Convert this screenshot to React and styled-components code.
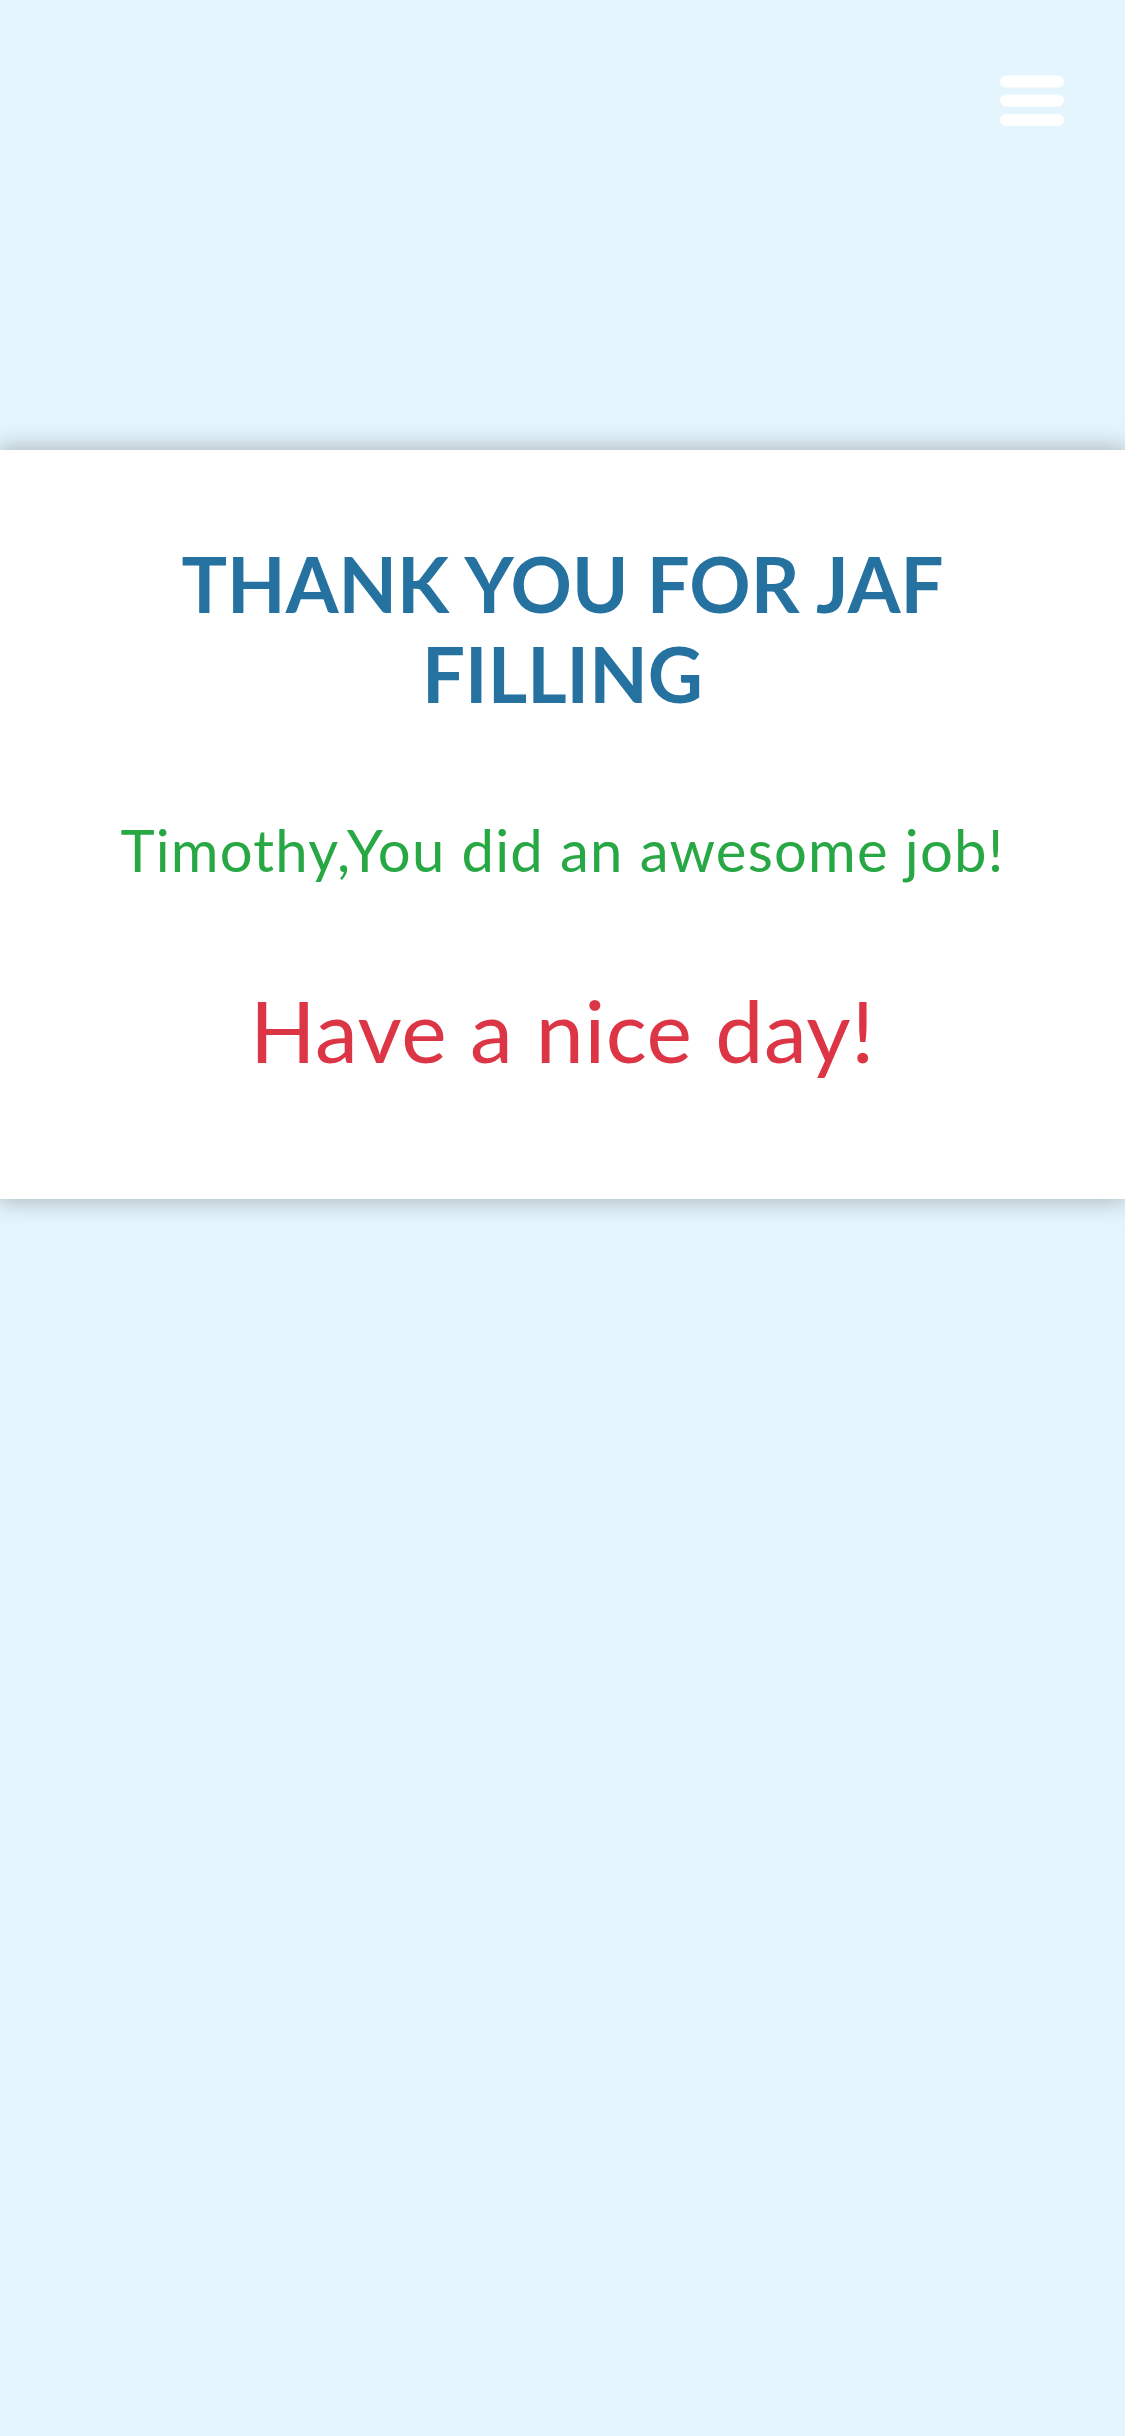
import React from "react";
import styled, { createGlobalStyle } from "styled-components";

const GlobalStyle = createGlobalStyle`
  html,
  body {
    margin: 0;
    padding: 0;
    background: #e4f5fe;
  }

  * {
    box-sizing: border-box;
  }
`;

const Page = styled.div`
  min-height: 100vh;
  background: #e4f5fe;
  font-family: "Lato", "Liberation Sans", sans-serif;
`;

const Header = styled.header`
  height: 450px;
  display: flex;
  justify-content: flex-end;
  align-items: flex-start;
  padding: 75px 61px 0 0;
`;

const MenuButton = styled.button`
  border: 0;
  padding: 0;
  background: none;
  width: 64px;
  height: 52px;
  cursor: pointer;
  display: block;

  svg {
    display: block;
  }
`;

const Card = styled.section`
  background: #fff;
  box-shadow: 0 0 22px 2px rgba(150, 158, 162, 0.75);
  padding: 89px 40px 118px;
  text-align: center;
`;

const Title = styled.h1`
  margin: 0 auto;
  max-width: 900px;
  font-size: 76px;
  line-height: 90px;
  font-weight: 700;
  color: #2572a0;
  text-transform: uppercase;
`;

const Message = styled.p`
  margin: ${(p) => p.$gap}px 0 0;
  font-size: ${(p) => p.$size}px;
  line-height: 1.2;
  letter-spacing: ${(p) => p.$spacing || 0}px;
  font-weight: 400;
  color: ${(p) => p.$color};
`;

const BarsIcon = () => (
  <svg width="64" height="52" viewBox="0 0 64 52" fill="#fff">
    <rect x="0" y="0.5" width="64" height="12" rx="6" />
    <rect x="0" y="19.5" width="64" height="12" rx="6" />
    <rect x="0" y="39" width="64" height="12" rx="6" />
  </svg>
);

const App = () => {
  return (
    <Page>
      <GlobalStyle />
      <Header>
        <MenuButton aria-label="menu">
          <BarsIcon />
        </MenuButton>
      </Header>
      <Card>
        <Title>Thank you for JAF filling</Title>
        <Message $gap={96} $size={58} $spacing={1.2} $color="#28a745">
          Timothy,You did an awesome job!
        </Message>
        <Message $gap={93} $size={86} $spacing={0.6} $color="#dc3545">
          Have a nice day!
        </Message>
      </Card>
    </Page>
  );
};

export default App;
